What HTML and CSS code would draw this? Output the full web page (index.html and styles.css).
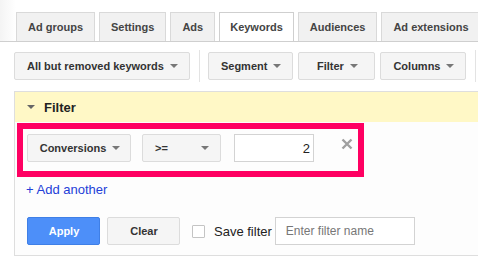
FILE: index.html
```html
<!DOCTYPE html>
<html lang="en">
<head>
    <meta charset="UTF-8">
    <title>Keywords filter</title>
    <link rel="stylesheet" href="styles.css">
</head>
<body>

    <!-- Tabs -->
    <div class="tabs">
        <div class="tab">Ad groups</div>
        <div class="tab">Settings</div>
        <div class="tab">Ads</div>
        <div class="tab active">Keywords</div>
        <div class="tab">Audiences</div>
        <div class="tab">Ad extensions</div>
        <div class="tab stub"></div>
    </div>

    <!-- Toolbar -->
    <div class="toolbar">
        <button class="btn">All but removed keywords <span class="caret"></span></button>
        <span class="sep"></span>
        <button class="btn">Segment <span class="caret"></span></button>
        <button class="btn">Filter <span class="caret"></span></button>
        <button class="btn">Columns <span class="caret"></span></button>
        <span class="sep"></span>
        <button class="btn stub"></button>
    </div>

    <!-- Filter panel -->
    <div class="panel">
        <div class="panel-head"><span class="tri"></span>Filter</div>
        <div class="panel-body">
            <div class="highlight">
                <button class="btn field">Conversions <span class="caret"></span></button>
                <button class="btn op">&gt;= <span class="caret"></span></button>
                <input class="num" type="text" value="2">
                <svg class="remove" width="12" height="12" viewBox="0 0 12 12">
                    <path d="M1.5 1.5 L10.5 10.5 M10.5 1.5 L1.5 10.5" stroke="#a0a0a0" stroke-width="2.4" fill="none"/>
                </svg>
            </div>
            <a class="add" href="#">+ Add another</a>
            <div class="actions">
                <button class="btn primary">Apply</button>
                <button class="btn plain">Clear</button>
                <span class="check"></span>
                <span class="save-label">Save filter</span>
                <input class="name" type="text" placeholder="Enter filter name">
            </div>
        </div>
    </div>

</body>
</html>
```

FILE: styles.css
```css
body {
    margin: 0;
    font-family: "Liberation Sans", Arial, sans-serif;
    background-color: #fff;
    overflow: hidden;
    width: 478px;
    height: 265px;
}

.tabs {
    display: flex;
    gap: 4px;
    padding: 12px 0 0 16px;
    border-bottom: 1px solid #cfcfcf;
    white-space: nowrap;
    overflow: hidden;
    background: linear-gradient(to right, #f4f4f4, #fff 16px);
}

.tab {
    flex: none;
    height: 28px;
    line-height: 28px;
    padding: 0 11px;
    background-color: #f1f1f1;
    border: 1px solid #d9d9d9;
    border-bottom: none;
    font-size: 11px;
    font-weight: bold;
    color: #444;
}

.tab.active {
    background-color: #fff;
    border-color: #cfcfcf;
    height: 29px;
    margin-bottom: -1px;
    padding: 0 10px;
}

.tab.stub {
    width: 40px;
    margin-left: 0;
}

.toolbar {
    display: flex;
    align-items: center;
    height: 28px;
    padding: 10px 0 0 14px;
    white-space: nowrap;
}

.btn {
    display: inline-flex;
    align-items: center;
    justify-content: center;
    gap: 6px;
    height: 28px;
    min-width: 77px;
    padding: 0 11px 0 12px;
    background-color: #f5f5f5;
    border: 1px solid #dcdcdc;
    border-radius: 2px;
    font-family: inherit;
    font-size: 11px;
    font-weight: bold;
    color: #333;
    flex: none;
}

.caret {
    width: 0;
    height: 0;
    border-left: 4px solid transparent;
    border-right: 4px solid transparent;
    border-top: 4px solid #777;
}

.toolbar .btn + .btn {
    margin-left: 5px;
}

.sep {
    width: 1px;
    height: 32px;
    background-color: #e3e3e3;
    margin: -2px 8px -2px 9px;
    flex: none;
}

.panel {
    margin: 11px 0 0 14px;
    border-top: 1px solid #dedede;
    border-left: 1px solid #dedede;
    border-bottom: 1px solid #dedede;
    background-color: #fdfdfd;
}

.panel-head {
    display: flex;
    align-items: center;
    height: 30px;
    background-color: #fff8c6;
    font-size: 13px;
    font-weight: bold;
    color: #222;
}

.tri {
    width: 0;
    height: 0;
    margin: 0 9px 0 12px;
    border-left: 4px solid transparent;
    border-right: 4px solid transparent;
    border-top: 4px solid #666;
}

.panel-body {
    padding: 1px 0 10px 0;
}

.highlight {
    display: flex;
    align-items: flex-start;
    width: 331px;
    height: 37px;
    margin-left: 2px;
    padding: 5px 0 0 4px;
    box-sizing: content-box;
    border: 6px solid #ff0062;
}

.highlight .field {
    width: 104px;
    padding: 0 11px 0 13px;
}

.highlight .op {
    width: 79px;
    margin-left: 11px;
    justify-content: space-between;
    padding: 0 11px 0 12px;
}

.num {
    width: 80px;
    height: 28px;
    box-sizing: border-box;
    margin-left: 13px;
    padding: 0 3px 0 6px;
    border: 1px solid #d3d3d3;
    background-color: #fff;
    text-align: right;
    font-family: inherit;
    font-size: 13px;
    color: #222;
}

.remove {
    margin: 4px 0 0 27px;
}

.add {
    display: block;
    margin: 5px 0 0 11px;
    font-size: 13px;
    line-height: 15px;
    color: #2440d8;
    text-decoration: none;
}

.actions {
    display: flex;
    align-items: center;
    margin: 20px 0 0 12px;
}

.actions .btn {
    width: 73px;
    min-width: 0;
}

.btn.primary {
    background-color: #4d8ff9;
    border-color: #3f7fe6;
    color: #fff;
}

.btn.plain {
    margin-left: 7px;
}

.check {
    width: 11px;
    height: 11px;
    margin-left: 12px;
    border: 1px solid #c4c4c4;
    border-radius: 1px;
    background-color: #fff;
    flex: none;
}

.save-label {
    margin-left: 9px;
    font-size: 13px;
    color: #222;
}

.name {
    width: 140px;
    height: 28px;
    box-sizing: border-box;
    margin-left: 3px;
    padding: 0 10px;
    border: 1px solid #d3d3d3;
    font-family: inherit;
    font-size: 12px;
}

.name::placeholder {
    color: #777;
}
```
